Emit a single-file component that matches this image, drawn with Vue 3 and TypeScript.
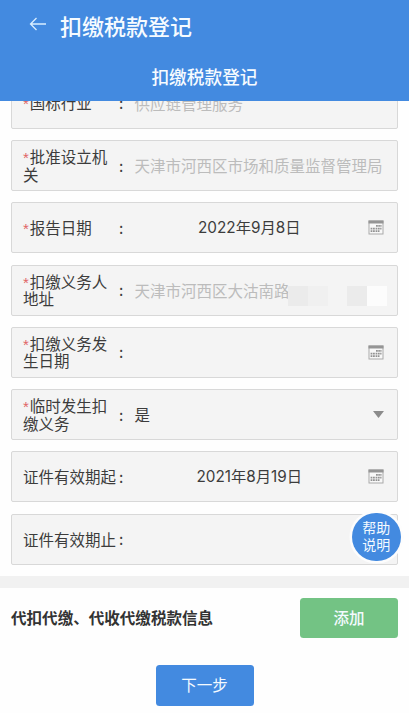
<script setup lang="ts">
interface Field {
  label: string
  required?: boolean
  value?: string
  kind: 'readonly' | 'date' | 'select'
  masked?: boolean
}

const fields: Field[] = [
  { label: '国标行业', required: true, value: '供应链管理服务', kind: 'readonly' },
  { label: '批准设立机关', required: true, value: '天津市河西区市场和质量监督管理局', kind: 'readonly' },
  { label: '报告日期', required: true, value: '2022年9月8日', kind: 'date' },
  { label: '扣缴义务人地址', required: true, value: '天津市河西区大沽南路', kind: 'readonly', masked: true },
  { label: '扣缴义务发生日期', required: true, kind: 'date' },
  { label: '临时发生扣缴义务', required: true, value: '是', kind: 'select' },
  { label: '证件有效期起', value: '2021年8月19日', kind: 'date' },
  { label: '证件有效期止', kind: 'date' },
]
</script>

<template>
  <div class="page">
    <header class="header">
      <div class="nav">
        <svg class="back" viewBox="0 0 18 14" width="18" height="14">
          <path d="M17 7H1.5M7.5 1L1.5 7l6 6" />
        </svg>
        <h1>扣缴税款登记</h1>
      </div>
      <h2>扣缴税款登记</h2>
    </header>

    <main class="form">
      <div v-for="f in fields" :key="f.label" class="field">
        <div class="label" :class="{ required: f.required }"><i v-if="f.required">*</i>{{ f.label }}</div>
        <span class="colon">:</span>
        <div class="value" :class="f.kind">{{ f.value }}</div>
        <svg v-if="f.kind === 'date'" class="cal" viewBox="0 0 16 15" width="16" height="15">
          <rect x="1" y="1" width="14" height="13" class="frame" />
          <rect x="0.5" y="0.5" width="15" height="3" class="bar" />
          <path
            class="dots"
            d="M8 5h1.8v1.7H8zM10.3 5h1.6v1.7h-1.6zM12.3 5h1.2v1.7h-1.2zM2.6 7.7h1.8v1.7H2.6zM5 7.7h1.8v1.7H5zM7.6 7.7h1.8v1.7H7.6zM10 7.7h1.7v1.7H10zM12.2 7.7h1.3v1.7h-1.3zM2.6 10.3h1.8V12H2.6zM5 10.3h1.8V12H5zM7.6 10.3h1.8V12H7.6zM10 10.3h1.5V12H10z"
          />
        </svg>
        <svg v-if="f.kind === 'select'" class="caret" viewBox="0 0 11 7" width="11" height="7">
          <path d="M0 0h11L5.5 7z" />
        </svg>
        <div v-if="f.masked" class="mask"><b /><b /><b /><b /><b /></div>
      </div>
      <button class="help">帮助<br />说明</button>
    </main>

    <div class="divider" />

    <section class="info">
      <h3>代扣代缴、代收代缴税款信息</h3>
      <button class="add">添加</button>
    </section>
    <footer class="footer">
      <button class="next">下一步</button>
    </footer>
  </div>
</template>

<style>
body {
  background: #fff;
}
</style>

<style scoped>
.page {
  box-sizing: border-box;
  width: 409px;
  height: 713px;
  overflow: hidden;
  background: #fefefe;
  color: #3c3c3c;
  font-family: "Noto Sans CJK SC", sans-serif;
  font-size: 15.5px;
}
h1, h2, h3 {
  margin: 0;
}
button {
  padding: 0 0 2px;
  border: 0;
  color: #f4faff;
  font-family: inherit;
}
.header {
  position: relative;
  z-index: 1;
  height: 101px;
  background: #438ae0;
  color: #f6fbff;
}
.nav {
  display: flex;
  align-items: center;
  height: 51px;
  padding-left: 29px;
  box-sizing: border-box;
}
.back {
  margin: -3px 13px 0 0;
  fill: none;
  stroke: #d9eeff;
  stroke-width: 1.3;
}
h1 {
  font-size: 22px;
  font-weight: 500;
  line-height: 51px;
}
h2 {
  font-size: 17.7px;
  font-weight: 500;
  line-height: 51px;
  text-align: center;
}
.form {
  position: relative;
  display: flex;
  flex-direction: column;
  gap: 11.3px;
  margin-top: -23.3px;
  padding: 0 11px 11.3px;
}
.field {
  position: relative;
  display: flex;
  align-items: center;
  box-sizing: border-box;
  height: 51px;
  padding: 0 13px 0 11px;
  border: 1px solid #d8d8d8;
  border-radius: 2px;
  background: #f4f4f4;
}
.label {
  flex: none;
  box-sizing: border-box;
  width: 95px;
  line-height: 17.5px;
}
.label.required {
  padding-right: 8px;
}
.label i {
  margin-right: 1px;
  color: #e06464;
  font-family: "Liberation Sans", sans-serif;
  font-size: 15px;
  font-style: normal;
  line-height: 1;
}
.colon {
  flex: none;
  width: 16.5px;
  padding-left: 1px;
  box-sizing: border-box;
  line-height: 20px;
  margin-top: -2px;
}
.value {
  flex: 1;
  white-space: nowrap;
  line-height: 20px;
}
.value.readonly {
  color: #bcbcbc;
}
.value.readonly,
.value.select {
  margin-top: -1px;
}
.value.date {
  padding-right: 4px;
  text-align: center;
  font-family: Inter, "Noto Sans CJK SC", sans-serif;
  font-size: 15.3px;
}
.cal {
  flex: none;
}
.cal .frame {
  fill: #f8f8f8;
  stroke: #aaa;
  stroke-width: 1;
}
.cal .bar {
  fill: #959595;
}
.cal .dots {
  fill: #929292;
}
.caret {
  fill: #8b8b8b;
}
.mask {
  position: absolute;
  right: 10px;
  bottom: 8.5px;
  display: flex;
}
.mask b {
  width: 19.8px;
  height: 20px;
}
.mask b:nth-child(1),
.mask b:nth-child(4) {
  background: #ebebeb;
}
.mask b:nth-child(2) {
  background: #f0f0f0;
}
.mask b:nth-child(5) {
  background: #fcfcfc;
}
.help {
  position: absolute;
  right: 8.5px;
  bottom: 15px;
  width: 48.5px;
  height: 48.5px;
  border-radius: 50%;
  background: #438ae0;
  box-shadow: 0 0 0 2.5px #fdfdfd;
  font-size: 14px;
  line-height: 17px;
}
.divider {
  height: 11.5px;
  background: #f1f1f1;
}
.info {
  display: flex;
  align-items: center;
  justify-content: space-between;
  padding: 10px 11px 0;
}
h3 {
  padding-bottom: 2px;
  color: #333;
  font-size: 15.55px;
  font-weight: 700;
}
.add,
.next {
  width: 98px;
  height: 40.5px;
  border-radius: 3.5px;
  font-size: 15.5px;
}
.add {
  background: #73c384;
  font-weight: 500;
}
.next {
  background: #438ae0;
}
.footer {
  display: flex;
  justify-content: center;
  padding-top: 27px;
}
</style>
